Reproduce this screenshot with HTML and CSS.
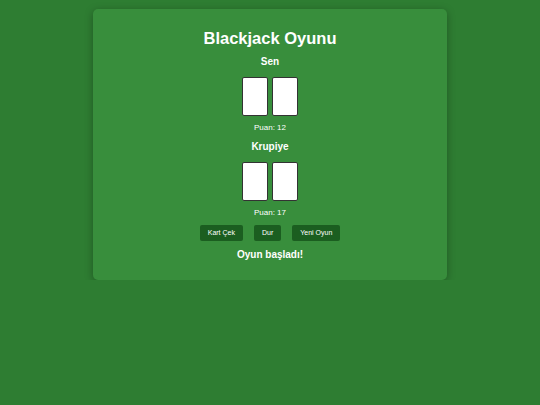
FILE: index.html
```html
<!DOCTYPE html>
<html lang="tr">
<head>
<meta charset="utf-8">
<title>Blackjack Oyunu</title>
<link rel="stylesheet" href="styles.css">
</head>
<body>
<div class="table">
  <h1 class="title">Blackjack Oyunu</h1>
  <h2 class="label">Sen</h2>
  <div class="hand">
    <div class="card"></div>
    <div class="card"></div>
  </div>
  <p class="score">Puan: 12</p>
  <h2 class="label">Krupiye</h2>
  <div class="hand">
    <div class="card"></div>
    <div class="card"></div>
  </div>
  <p class="score">Puan: 17</p>
  <div class="controls">
    <button class="btn">Kart Çek</button>
    <button class="btn">Dur</button>
    <button class="btn">Yeni Oyun</button>
  </div>
  <p class="message">Oyun başladı!</p>
</div>
</body>
</html>
```
FILE: styles.css
```css
html, body {
  margin: 0;
  padding: 0;
}
body {
  background: #2e7d32;
  font-family: "Liberation Sans", Arial, sans-serif;
  color: #fff;
  padding-top: 9px;
}
.table {
  width: 354px;
  box-sizing: border-box;
  margin: 0 auto;
  background: #388e3c;
  border-radius: 5px;
  box-shadow: 0 2px 8px rgba(0,0,0,0.3);
  padding: 19px 10px 18px;
  display: flex;
  flex-direction: column;
  align-items: center;
  height: 271px;
}
.title {
  margin: 0;
  font-size: 16.5px;
  line-height: 20px;
  font-weight: bold;
}
.label {
  margin: 8px 0 0;
  font-size: 10px;
  line-height: 12px;
  font-weight: bold;
}
.hand {
  display: flex;
  gap: 4px;
  margin-top: 9px;
}
.card {
  width: 24px;
  height: 37px;
  background: #fff;
  border: 1px solid #333;
  border-radius: 2px;
}
.score {
  margin: 7px 0 0;
  font-size: 8px;
  line-height: 10px;
}
.hand + .score + .label {
  margin-top: 8px;
}
.controls {
  display: flex;
  gap: 11px;
  margin-top: 7px;
}
.btn {
  font-family: "Liberation Sans", Arial, sans-serif;
  font-size: 7px;
  color: #fff;
  background: #1b5e20;
  border: none;
  border-radius: 2px;
  height: 16px;
  padding: 0 8px;
  line-height: 16px;
}
.message {
  margin: 8px 0 0;
  font-size: 10px;
  line-height: 12px;
  font-weight: bold;
}
```
